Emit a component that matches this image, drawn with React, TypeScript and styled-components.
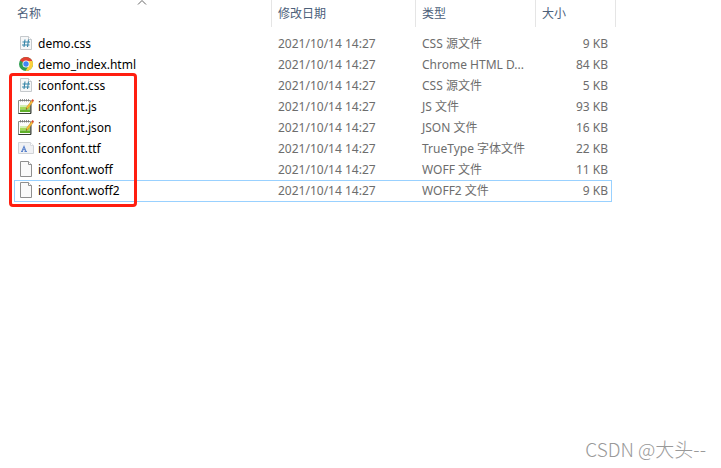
import React from 'react';
import styled, { createGlobalStyle } from 'styled-components';

const GlobalStyle = createGlobalStyle`
  * { box-sizing: border-box; }
  body {
    margin: 0;
    background: #fff;
    font-family: "Noto Sans", "Noto Sans CJK SC", sans-serif;
  }
`;

const Page = styled.main`
  position: relative;
  min-height: 100vh;
  padding: 0 109px 0 14px;
`;

const ListArea = styled.div`
  position: relative;
`;

const FileTable = styled.table`
  width: 100%;
  table-layout: fixed;
  border-collapse: separate;
  border-spacing: 0;
  font-size: 12px;
  line-height: 18px;
  color: #6d6d6d;
`;

const HeaderCell = styled.th<{ $width?: number; $inset?: number }>`
  position: relative;
  width: ${({ $width }) => ($width ? `${$width}px` : 'auto')};
  height: 26px;
  padding: 2px 0 0 ${({ $inset = 6 }) => $inset}px;
  font-weight: 400;
  text-align: left;
  color: #4c607a;
`;

const SortButton = styled.button`
  display: block;
  padding: 0;
  border: 0;
  background: none;
  color: inherit;
  font: inherit;
  line-height: 18px;
`;

const Divider = styled.span<{ $overhang?: number }>`
  position: absolute;
  top: 0;
  right: ${({ $overhang = 0 }) => -$overhang}px;
  width: 1px;
  height: 27px;
  background: #e5e5e5;
`;

const SortMark = styled.svg`
  position: absolute;
  top: 0;
  left: calc(50% - 6px);
`;

const Spacer = styled.tbody`
  td { height: 7px; padding: 0; }
`;

const FileRow = styled.tr<{ $focused?: boolean }>`
  td {
    height: ${({ $focused }) => ($focused ? 22 : 21)}px;
    padding: 0 6px;
    border: 0 solid #99d1ff;
    border-width: ${({ $focused }) => ($focused ? '1px 0' : '0')};
    white-space: nowrap;
    overflow: hidden;
    text-overflow: ellipsis;
  }
  td:first-child {
    padding: 0 0 0 ${({ $focused }) => ($focused ? 3 : 4)}px;
    border-left-width: ${({ $focused }) => ($focused ? 1 : 0)}px;
  }
  td:last-child {
    padding: 0 ${({ $focused }) => ($focused ? 3 : 4)}px 0 0;
    border-right-width: ${({ $focused }) => ($focused ? 1 : 0)}px;
    text-align: right;
  }
`;

const FileName = styled.div`
  display: flex;
  align-items: flex-start;
  gap: 4px;
  color: #000;
`;

const Icon = styled.svg`
  flex: none;
  display: block;
`;

const Highlight = styled.div`
  position: absolute;
  top: 73px;
  left: -5px;
  width: 128px;
  height: 134px;
  border: 3px solid #ff1e10;
  border-radius: 4px;
  pointer-events: none;
`;

const Watermark = styled.footer`
  position: absolute;
  right: 15px;
  bottom: 6px;
  font-family: "Noto Sans CJK SC", sans-serif;
  font-size: 19px;
  font-weight: 300;
  line-height: 26px;
  color: #999;
`;

type IconKind = 'css' | 'chrome' | 'script' | 'font' | 'blank';

function IconDrawing({ kind }: { kind: IconKind }) {
  switch (kind) {
    case 'css':
      return (
        <>
          <path d="M2.5 1.5h8l3 3v10h-11z" fill="#f6f7f8" stroke="#c5c9cc" />
          <path d="M10.5 1.5v3h3" fill="#fff" stroke="#c5c9cc" />
          <path d="M7 4.500 6 12M10.5 4.500l-1 7.500M4.500 7h7.500M4 10h7.500" fill="none" stroke="#3786a8" strokeWidth="1.100" />
        </>
      );
    case 'chrome':
      return (
        <>
          <circle cx="8" cy="8" r="7" fill="#2f9e50" />
          <path d="M8 8 1.900 4.500A7 7 0 0 1 14.100 4.500L14.100 5H8z" fill="#e34133" />
          <path d="M8 5h6.300A7 7 0 0 1 7.500 15L10.800 9.500z" fill="#fdd03b" />
          <circle cx="8" cy="8" r="3.500" fill="#fff" />
          <circle cx="8" cy="8" r="2.700" fill="#4285f4" />
        </>
      );
    case 'script':
      return (
        <>
          <path d="M.5 2.500h12v13H.5z" fill="#fbfcfa" stroke="#8b9088" />
          <path d="M2 7h10v2.500H2z" fill="#d3efb2" />
          <path d="M2 9h10v2.500H2z" fill="#a3d95a" />
          <path d="M2 11.500h10v2.500H2z" fill="#5fb02a" />
          <path d="M.5 15.500h12.500V6" fill="none" stroke="#333a30" />
          <path d="M2.500 1v2.500M4.500 1v2.500M6.500 1v2.500M8.500 1v2.500M10.500 1v2.500" stroke="#777" strokeWidth=".8" />
          <path d="m8 11.500.6-2.500 5-6.500 1.600 1.200-5 6.500z" fill="#fbbd35" stroke="#a87428" strokeWidth=".4" />
          <path d="m13.400 2.700 1-1.700 1.600 1.200-1 1.700z" fill="#d84b32" />
          <path d="m8 11.500.3-1.200.8.6z" fill="#222" />
        </>
      );
    case 'font':
      return (
        <>
          <path d="M.5 2.500h12l3 3v8H.5z" fill="#f0f1f4" stroke="#d0d3d7" />
          <path d="M12.500 2.500v3h3" fill="#fff" stroke="#d9dbdf" />
          <path d="M3 11.500h2M3.800 11.500 6 6.500 8 11.500M4.700 9.700h2.600M6.500 11.500h2.500" fill="none" stroke="#5b83cc" strokeWidth="1.100" />
        </>
      );
    default:
      return (
        <>
          <path d="M2.500.5h8l3 3v12h-11z" fill="#fafafa" stroke="#8f8f8f" />
          <path d="M10.500.5v3h3" fill="#fff" stroke="#8f8f8f" />
        </>
      );
  }
}

interface FileEntry {
  name: string;
  icon: IconKind;
  type: string;
  size: string;
  focused?: boolean;
}

const files: FileEntry[] = [
  { name: 'demo.css', icon: 'css', type: 'CSS 源文件', size: '9 KB' },
  { name: 'demo_index.html', icon: 'chrome', type: 'Chrome HTML D...', size: '84 KB' },
  { name: 'iconfont.css', icon: 'css', type: 'CSS 源文件', size: '5 KB' },
  { name: 'iconfont.js', icon: 'script', type: 'JS 文件', size: '93 KB' },
  { name: 'iconfont.json', icon: 'script', type: 'JSON 文件', size: '16 KB' },
  { name: 'iconfont.ttf', icon: 'font', type: 'TrueType 字体文件', size: '22 KB' },
  { name: 'iconfont.woff', icon: 'blank', type: 'WOFF 文件', size: '11 KB' },
  { name: 'iconfont.woff2', icon: 'blank', type: 'WOFF2 文件', size: '9 KB', focused: true },
];

export default function App() {
  return (
    <>
      <GlobalStyle />
      <Page lang="zh-CN">
        <ListArea>
          <FileTable>
            <thead>
              <tr>
                <HeaderCell $inset={3} scope="col" aria-sort="ascending">
                  <SortButton type="button">名称</SortButton>
                  <SortMark width="10" height="6" viewBox="0 0 10 6" aria-hidden="true">
                    <path d="M1 4.500 5 .5l4 4" fill="none" stroke="#666" />
                  </SortMark>
                  <Divider />
                </HeaderCell>
                <HeaderCell $width={144} scope="col">
                  <SortButton type="button">修改日期</SortButton>
                  <Divider />
                </HeaderCell>
                <HeaderCell $width={120} scope="col">
                  <SortButton type="button">类型</SortButton>
                  <Divider />
                </HeaderCell>
                <HeaderCell $width={76} scope="col">
                  <SortButton type="button">大小</SortButton>
                  <Divider $overhang={4} />
                </HeaderCell>
              </tr>
            </thead>
            <Spacer aria-hidden="true">
              <tr><td colSpan={4} /></tr>
            </Spacer>
            <tbody>
              {files.map((file) => (
                <FileRow key={file.name} $focused={file.focused}>
                  <td>
                    <FileName>
                      <Icon width="16" height="16" viewBox="0 0 16 16" aria-hidden="true">
                        <IconDrawing kind={file.icon} />
                      </Icon>
                      {file.name}
                    </FileName>
                  </td>
                  <td>2021/10/14 14:27</td>
                  <td>{file.type}</td>
                  <td>{file.size}</td>
                </FileRow>
              ))}
            </tbody>
          </FileTable>
          <Highlight />
        </ListArea>
        <Watermark>CSDN @大头--</Watermark>
      </Page>
    </>
  );
}
